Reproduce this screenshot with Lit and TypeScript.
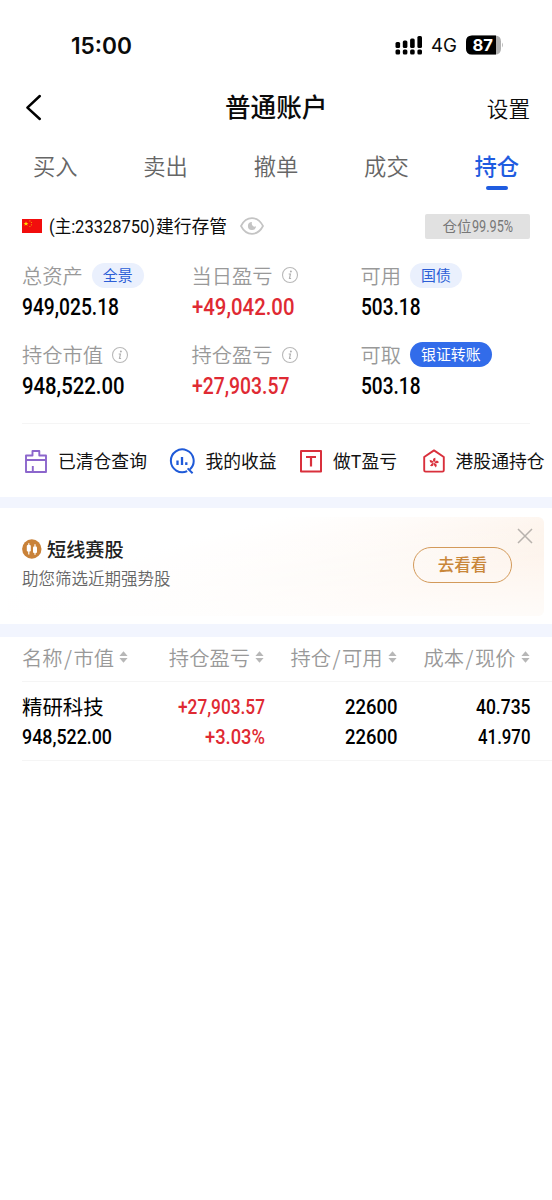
import { LitElement, html, svg, css } from "lit";
import { customElement, property } from "lit/decorators.js";

/* A single line of text condensed to an exact advance width. */
@customElement("fit-text")
class FitText extends LitElement {
  @property() text = "";
  @property({ type: Number }) w = 100;
  @property({ type: Number }) size = 23.5;
  static styles = css`
    :host { display: block; }
    svg { display: block; overflow: visible; }
    text { fill: currentColor; }
  `;
  render() {
    const h = Math.round(this.size * 1.2);
    return html`<svg width=${this.w} height=${h} font-size=${this.size}>
      <text x="0" y=${h / 2 + this.size * 0.356} textLength=${this.w} lengthAdjust="spacingAndGlyphs">${this.text}</text>
    </svg>`;
  }
}

const info = html`<svg class="info" width="18" height="18" viewBox="0 0 18 18" fill="none" stroke="#b9b9b9">
  <circle cx="9" cy="9" r="7.5" stroke-width="1.1" />
  <circle cx="9.9" cy="5.5" r="1" fill="#b0b0b0" stroke="none" />
  <path d="M7.7 8h1.7L8.5 12.5h1.6" stroke-width="1.2" stroke="#b0b0b0" />
</svg>`;

const sort = html`<svg width="9" height="12" viewBox="0 0 9 12" fill="#b7b7b7">
  <path d="M4.500.3 8.600 5H.4zM.4 7h8.200L4.500 11.700z" />
</svg>`;

const icons = {
  cleared: html`<svg width="24" height="26" viewBox="0 0 24 26" fill="none" stroke="#8c66cc" stroke-width="1.9" stroke-linejoin="round">
    <path d="M2 7.500h6.500V3h6.800v4.500H22V24H2zM2 12h20M8.800 18v6" />
  </svg>`,
  profit: html`<svg width="26" height="26" viewBox="0 0 26 26" fill="none" stroke="#1f5ad8" stroke-width="2">
    <path d="M21 21.2A11.4 11.4 0 1 0 18.2 23.1M18.6 20.4l5 4.8" />
    <path d="M8.5 12.5v4.6M13 9v8.1M17.3 14.2v2.9" stroke-width="2.3" />
  </svg>`,
  t: html`<svg width="24" height="26" viewBox="0 0 24 26" fill="none" stroke="#d9303c" stroke-width="2" stroke-linejoin="round">
    <rect x="2" y="3" width="20" height="20.6" /><path d="M7 9h10M12 9v9.6" stroke-width="2.2" />
  </svg>`,
  hk: html`<svg width="24" height="26" viewBox="0 0 24 26" fill="none" stroke="#d9303c" stroke-width="1.9" stroke-linejoin="round">
    <path d="M12 2.4 21.8 9v13.2q0 1.4-1.4 1.4H3.600q-1.4 0-1.4-1.4V9z" />
    ${[0, 72, 144, 216, 288].map(
      (a) => svg`<path transform="rotate(${a + 10} 12 14.6)" d="M12 14.200C9.900 12.500 10 10.400 12.600 9.500c-.3 1.400 1.400 2.500-.6 4.700z" fill="#d9303c" stroke="none" />`
    )}
  </svg>`,
};

const quick = [
  { k: "cleared", label: "已清仓查询" },
  { k: "profit", label: "我的收益" },
  { k: "t", label: "做T盈亏" },
  { k: "hk", label: "港股通持仓" },
];

const tabs = ["买入", "卖出", "撤单", "成交", "持仓"];

@customElement("app-root")
class AppRoot extends LitElement {
  static styles = css`
    :host { display: block; width: 552px; height: 1200px; background: #fff; color: #0b0b0b; overflow: hidden;
      font-family: Roboto, "Noto Sans CJK SC", sans-serif; white-space: nowrap; }
    * { box-sizing: border-box; }
    svg { display: block; flex: none; }
    .cjk { font-family: "Noto Sans CJK SC", sans-serif; }
    .status { height: 70px; padding: 20px 49px 0 71px; display: flex; align-items: center; font-family: Inter, sans-serif; }
    .time { font-weight: 600; flex: 1; }
    .net { margin: 0 9px 0 8px; }
    .head { height: 74px; display: grid; grid-template-columns: 1fr 104px 1fr; align-items: center; padding: 0 22px 0 24px; font-family: "Noto Sans CJK SC", sans-serif; }
    .title { font-size: 25.6px; font-weight: 500; line-height: 30px; padding-bottom: 2px; }
    .set { text-align: right; font-size: 21.6px; line-height: 30px; font-weight: 350; padding-top: 1px; }
    .tabs { height: 54px; display: grid; grid-template-columns: repeat(5, 1fr); font-family: "Noto Sans CJK SC", sans-serif; font-size: 22.300px; color: #666; font-weight: 350; }
    .tab { display: flex; flex-direction: column; align-items: center; line-height: 32px; padding-top: 5px; }
    .on { color: #1f5ce0; font-weight: 500; }
    .on::after { content: ""; width: 22px; height: 4px; border-radius: 2px; background: #1f5ce0; margin-top: 5px; }
    .acct { height: 56px; display: flex; align-items: center; padding: 0 22px; }
    .no { margin-left: 7px; }
    .bank { width: 71px; margin: 0 13px 0 1px; font-size: 17.800px; line-height: 26px; font-weight: 400; padding-bottom: 3px; }
    .ratio { margin-left: auto; width: 105px; height: 25px; border-radius: 2px; background: #e1e1e1; color: #777; display: flex; align-items: center; justify-content: center; font-size: 14.500px; line-height: 24px; }
    .metrics { display: grid; grid-template-columns: 169.5px 169px 1fr; grid-template-rows: 79.500px 80px; padding: 6px 22px 0; height: 169px; }
    .lab { height: 30px; display: flex; align-items: center; color: #999; font-size: 20.3px; font-weight: 350; }
    .lab > span:first-child { padding-bottom: 1px; }
    .info { margin-left: 8px; }
    .pill { margin-left: 9px; height: 25px; padding: 0 11px; border-radius: 13px; font-size: 14.9px; line-height: 24px; background: #eaf0fd; color: #2c5ed6; font-weight: 400; }
    .solid { background: #326cea; color: #fff; }
    .val { padding-top: 2.500px; font-weight: 500; color: #000; }
    .red, .val.red { color: #df2a33; }
    .rule { height: 1px; background: #f5f5f5; margin-left: 22px; }
    .short { margin-right: 22px; }
    .quick { height: 73px; display: flex; align-items: center; padding: 0 0 0 24px; gap: 22.500px; font-size: 17.800px; color: #111; }
    .q { display: flex; align-items: center; gap: 10px; }
    .q span { padding-bottom: 2px; }
    .q:last-child { margin-left: 2px; }
    .band { height: 11px; background: #f2f5fe; }
    .tall { height: 13px; }
    .promo { height: 99px; margin: 9px 8px 8px; border-radius: 6px; display: flex; padding: 0 10px 0 14px;
      background: linear-gradient(to bottom, rgba(255,255,255,0) 10%, rgba(255,255,255,.75) 100%), linear-gradient(165deg, #fff 0 30%, rgba(255,255,255,0) 75%), linear-gradient(90deg, #fffdfc, #fdf1e7); }
    .copy { flex: 1; padding-top: 17px; }
    .name { display: flex; align-items: center; gap: 5px; font-size: 19.200px; font-weight: 500; line-height: 30px; color: #222; }
    .sub { font-size: 16.500px; line-height: 28px; color: #666; font-weight: 350; }
    .go { width: 99px; height: 36px; border: 1px solid #d39a5a; border-radius: 18px; margin: 30px 4px 0 0; text-align: center; font-size: 16.500px; font-weight: 500; line-height: 33px; color: #c9873a; }
    .x { margin-top: 10px; }
    .cols { display: grid; grid-template-columns: 110px 132.500px 132.500px 133px; padding: 0 22px; align-items: center; justify-items: end; }
    .cols > .start, .th > :first-child { justify-self: start; }
    .th { height: 44px; color: #999; font-size: 20.300px; font-weight: 350; padding-bottom: 4px; }
    .h { display: flex; align-items: center; gap: 5px; padding-right: 0.500px; }
    .h > svg { margin-top: -1px; }
    .h > span { padding-bottom: 1px; }
    .sl { padding: 0 1.500px; }
    .tr { height: 78px; padding-top: 10px; padding-bottom: 8px; grid-template-rows: 30px 30px; font-weight: 500; color: #000; }
    .stock { font-size: 20.400px; font-weight: 400; line-height: 30px; padding-bottom: 2px; }
  `;

  num(text: string, w: number, size = 23.6) {
    return html`<fit-text .text=${text} .w=${w} .size=${size}></fit-text>`;
  }

  metric(label: string, extra: unknown, text: string, w: number, red = false) {
    return html`<div>
      <div class="lab cjk"><span>${label}</span>${extra}</div>
      <div class="val ${red ? "red" : ""}">${this.num(text, w)}</div>
    </div>`;
  }

  head(a: string, b = "") {
    return html`<div class="h"><span>${a}${b ? html`<span class="sl">/</span>${b}` : ""}</span>${sort}</div>`;
  }

  render() {
    return html`
      <div class="status">
        <div class="time">${this.num("15:00", 61, 22.6)}</div>
        <svg width="28" height="20" viewBox="0 0 28 20" fill="#000">
          ${[0, 1, 2, 3].map((i) => svg`
            <rect x=${0.5 + i * 7.3} y=${[7, 5.5, 3.5, 1][i]} width="4.6" height=${[6, 7.5, 9.5, 12][i]} rx="1.5" />
            <rect x=${0.5 + i * 7.3} y="14.500" width="4.600" height="5" rx="1.500" />`)}
        </svg>
        <div class="net">${this.num("4G", 26, 18.5)}</div>
        <svg width="37" height="20" viewBox="0 0 37 20">
          <path d="M6 .5h23q6 0 6 6v7q0 6-6 6H6q-6 0-6-6v-7q0-6 6-6z" fill="#b0b0b0" />
          <path d="M6 .5h24v19H6q-6 0-6-6v-7q0-6 6-6z" fill="#000" />
          <path d="M36 7.500q1.800 2.500 0 5z" fill="#b0b0b0" />
          <text x="6.500" y="16" font-size="16.500" font-weight="700" fill="#fff" textLength="20.500" lengthAdjust="spacingAndGlyphs">87</text>
        </svg>
      </div>
      <div class="head">
        <svg width="18" height="28" viewBox="0 0 18 28" fill="none" stroke="#000" stroke-width="2.500" stroke-linecap="round" stroke-linejoin="round"><path d="M15.800 3 3.400 14.700 15.800 26" /></svg>
        <div class="title">普通账户</div>
        <div class="set">设置</div>
      </div>
      <div class="tabs">${tabs.map((t, i) => html`<div class="tab ${i === 4 ? "on" : ""}">${t}</div>`)}</div>

      <div class="acct">
        <svg width="20" height="14" viewBox="0 0 19 14" preserveAspectRatio="none">
          <rect width="19" height="14" fill="#f20d0d" />
          <path d="m3.800 2.200.6 1.700h1.800L4.800 5l.5 1.800-1.500-1.100-1.500 1.100.5-1.800-1.400-1.100h1.800z" fill="#ffde00" />
          <g fill="#f5a400"><circle cx="7.500" cy="1.900" r=".6" /><circle cx="9" cy="3.500" r=".6" /><circle cx="9" cy="5.800" r=".6" /><circle cx="7.500" cy="7.500" r=".6" /></g>
        </svg>
        <div class="no">${this.num("(主:23328750)", 106, 18.6)}</div>
        <div class="bank cjk">建行存管</div>
        <svg width="24" height="18" viewBox="0 0 24 18" fill="none" stroke="#c4c4c4" stroke-width="1.700">
          <path d="M1 9Q5 1.200 12 1.200T23 9Q19 16.800 12 16.800T1 9z" />
          <path d="M12 4.900a4.100 4.100 0 1 0 4.100 4.400q-2 1-3.400-.5t-.7-3.900z" fill="#c4c4c4" stroke="none" />
        </svg>
        <div class="ratio"><span class="cjk">仓位</span>${this.num("99.95%", 41, 15.8)}</div>
      </div>

      <div class="metrics">
        ${this.metric("总资产", html`<span class="pill">全景</span>`, "949,025.18", 97)}
        ${this.metric("当日盈亏", info, "+49,042.00", 102.5, true)}
        ${this.metric("可用", html`<span class="pill">国债</span>`, "503.18", 59.5)}
        ${this.metric("持仓市值", info, "948,522.00", 102.5)}
        ${this.metric("持仓盈亏", info, "+27,903.57", 97.5, true)}
        ${this.metric("可取", html`<span class="pill solid">银证转账</span>`, "503.18", 59.5)}
      </div>
      <div class="rule short"></div>
      <div class="quick cjk">${quick.map((q) => html`<div class="q">${icons[q.k]}<span>${q.label}</span></div>`)}</div>
      <div class="band"></div>

      <div class="promo cjk">
        <div class="copy">
          <div class="name">
            <svg width="20" height="20" viewBox="0 0 20 20"><circle cx="9.800" cy="10" r="9.700" fill="#c98239" />
              <path d="M6.800 4.200v11.200M13 5.200v10.500" stroke="#fff" stroke-width="1.200" />
              <rect x="4.800" y="6" width="4" height="6.500" rx="1" fill="#fff" /><rect x="11" y="7.500" width="4" height="6.500" rx="1" fill="#fff" />
            </svg>短线赛股
          </div>
          <div class="sub">助您筛选近期强势股</div>
        </div>
        <div class="go">去看看</div>
        <svg class="x" width="18" height="18" viewBox="0 0 18 18" stroke="#b7b2ad" stroke-width="1.500"><path d="m2 2 14 14M16 2 2 16" /></svg>
      </div>
      <div class="band tall"></div>

      <div class="cols th cjk">
        ${this.head("名称", "市值")}${this.head("持仓盈亏")}${this.head("持仓", "可用")}${this.head("成本", "现价")}
      </div>
      <div class="rule"></div>
      <div class="cols tr">
        <div class="stock cjk start">精研科技</div>
        <div class="red">${this.num("+27,903.57", 87, 20.4)}</div>
        ${this.num("22600", 52.5, 20.4)}${this.num("40.735", 54.5, 20.4)}
        <div class="start">${this.num("948,522.00", 90, 20.4)}</div>
        <div class="red">${this.num("+3.03%", 60, 20.4)}</div>
        ${this.num("22600", 52.5, 20.4)}${this.num("41.970", 52.5, 20.4)}
      </div>
      <div class="rule"></div>
    `;
  }
}
